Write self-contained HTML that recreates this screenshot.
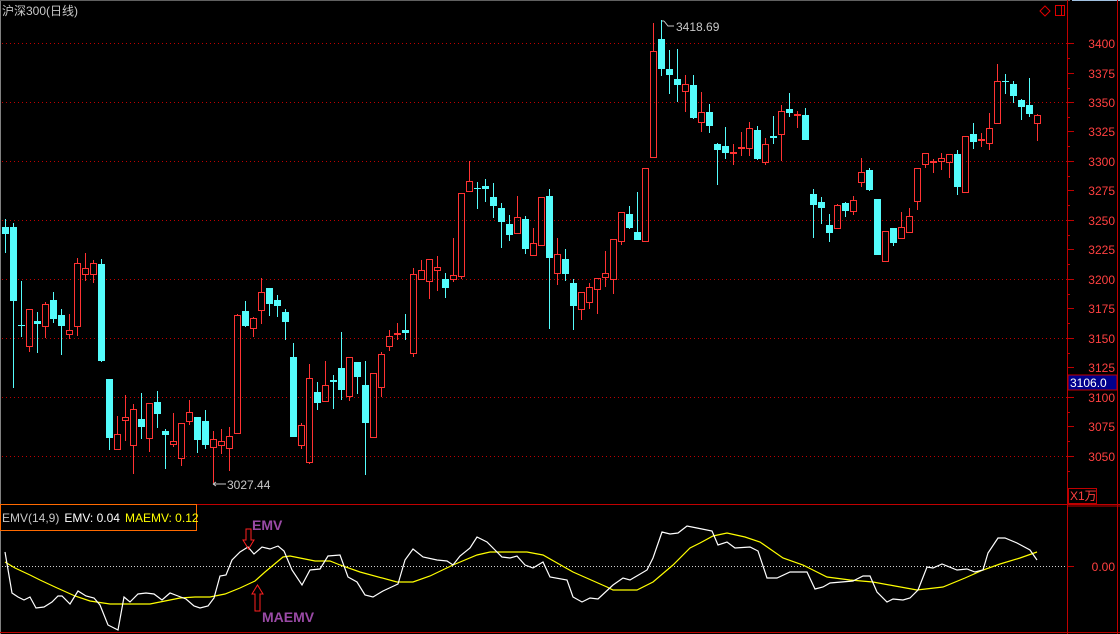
<!DOCTYPE html>
<html><head><meta charset="utf-8"><style>
html,body{margin:0;padding:0;background:#000;}
svg{display:block;}
text{font-family:"Liberation Sans","Noto Sans CJK SC",sans-serif;}
</style></head><body>
<svg width="1120" height="634" viewBox="0 0 1120 634" xmlns="http://www.w3.org/2000/svg" shape-rendering="crispEdges">
<rect width="1120" height="634" fill="#000"/>
<line x1="0.5" y1="0" x2="0.5" y2="634" stroke="#808080"/>
<line x1="0" y1="0.5" x2="1070" y2="0.5" stroke="#606060"/>
<line x1="1072" y1="0.5" x2="1120" y2="0.5" stroke="#a0c0e0"/>
<g stroke="#c00000" stroke-dasharray="1,3">
<line x1="2" y1="43.5" x2="1067" y2="43.5"/><line x1="2" y1="102.5" x2="1067" y2="102.5"/>
<line x1="2" y1="161.5" x2="1067" y2="161.5"/><line x1="2" y1="220.5" x2="1067" y2="220.5"/>
<line x1="2" y1="279.5" x2="1067" y2="279.5"/><line x1="2" y1="338.5" x2="1067" y2="338.5"/>
<line x1="2" y1="397.5" x2="1067" y2="397.5"/><line x1="2" y1="456.5" x2="1067" y2="456.5"/>
</g>
<g stroke="#c00000" fill="none">
<line x1="1067.5" y1="0" x2="1067.5" y2="634"/>
<line x1="1117.5" y1="0" x2="1117.5" y2="634"/>
<line x1="0" y1="504.5" x2="1120" y2="504.5"/>
<line x1="1067" y1="506" x2="1120" y2="506"/>
<line x1="0" y1="632.5" x2="1120" y2="632.5"/>
<rect x="1068.5" y="488.5" width="28" height="15"/>
</g>
<g stroke="#c00000">
<line x1="1067" y1="43.5" x2="1074" y2="43.5"/><line x1="1067" y1="73.5" x2="1074" y2="73.5"/><line x1="1067" y1="102.5" x2="1074" y2="102.5"/><line x1="1067" y1="131.5" x2="1074" y2="131.5"/><line x1="1067" y1="161.5" x2="1074" y2="161.5"/><line x1="1067" y1="190.5" x2="1074" y2="190.5"/><line x1="1067" y1="220.5" x2="1074" y2="220.5"/><line x1="1067" y1="249.5" x2="1074" y2="249.5"/><line x1="1067" y1="279.5" x2="1074" y2="279.5"/><line x1="1067" y1="308.5" x2="1074" y2="308.5"/><line x1="1067" y1="338.5" x2="1074" y2="338.5"/><line x1="1067" y1="367.5" x2="1074" y2="367.5"/><line x1="1067" y1="397.5" x2="1074" y2="397.5"/><line x1="1067" y1="426.5" x2="1074" y2="426.5"/><line x1="1067" y1="456.5" x2="1074" y2="456.5"/>
<line x1="1067" y1="58.5" x2="1070" y2="58.5"/><line x1="1067" y1="88.5" x2="1070" y2="88.5"/><line x1="1067" y1="117.5" x2="1070" y2="117.5"/><line x1="1067" y1="146.5" x2="1070" y2="146.5"/><line x1="1067" y1="176.5" x2="1070" y2="176.5"/><line x1="1067" y1="205.5" x2="1070" y2="205.5"/><line x1="1067" y1="235.5" x2="1070" y2="235.5"/><line x1="1067" y1="264.5" x2="1070" y2="264.5"/><line x1="1067" y1="294.5" x2="1070" y2="294.5"/><line x1="1067" y1="323.5" x2="1070" y2="323.5"/><line x1="1067" y1="353.5" x2="1070" y2="353.5"/><line x1="1067" y1="412.5" x2="1070" y2="412.5"/><line x1="1067" y1="441.5" x2="1070" y2="441.5"/><line x1="1067" y1="471.5" x2="1070" y2="471.5"/>
<line x1="1067" y1="566.5" x2="1074" y2="566.5"/>
</g>
<g fill="#ff4040" font-size="12" text-anchor="end">
<text x="1115" y="48">3400</text><text x="1115" y="78">3375</text><text x="1115" y="107">3350</text><text x="1115" y="136">3325</text><text x="1115" y="166">3300</text><text x="1115" y="195">3275</text><text x="1115" y="225">3250</text><text x="1115" y="254">3225</text><text x="1115" y="284">3200</text><text x="1115" y="313">3175</text><text x="1115" y="343">3150</text><text x="1115" y="372">3125</text><text x="1115" y="402">3100</text><text x="1115" y="431">3075</text><text x="1115" y="461">3050</text>
<text x="1115" y="571">0.00</text>
</g>
<rect x="1068" y="375" width="49" height="15" fill="#00008c" stroke="#c00000"/>
<text x="1070" y="387" fill="#ffffff" font-size="12">3106.0</text>
<text x="1070" y="500" fill="#ff4040" font-size="12">X1万</text>
<g fill="none" stroke="#e00000">
<path d="M1045 6 L1050 11 L1045 16 L1040 11 Z" shape-rendering="auto"/>
<rect x="1055.5" y="5.5" width="9" height="10"/>
<line x1="1061.5" y1="5" x2="1061.5" y2="16"/>
</g>
<text x="2" y="15" fill="#c8c8c8" font-size="12">沪深300(日线)</text>
<g stroke="#54fcfc">
<line x1="5.5" y1="219" x2="5.5" y2="253"/><line x1="13.5" y1="223" x2="13.5" y2="388"/><line x1="21.5" y1="281" x2="21.5" y2="337"/><line x1="37.5" y1="312" x2="37.5" y2="353"/><line x1="53.5" y1="292" x2="53.5" y2="323"/><line x1="61.5" y1="309" x2="61.5" y2="355"/><line x1="101.5" y1="259" x2="101.5" y2="362"/><line x1="109.5" y1="379" x2="109.5" y2="450"/><line x1="141.5" y1="393" x2="141.5" y2="439"/><line x1="157.5" y1="391" x2="157.5" y2="428"/><line x1="165.5" y1="429" x2="165.5" y2="469"/><line x1="197.5" y1="417" x2="197.5" y2="453"/><line x1="205.5" y1="410" x2="205.5" y2="449"/><line x1="245.5" y1="301" x2="245.5" y2="327"/><line x1="269.5" y1="288" x2="269.5" y2="316"/><line x1="277.5" y1="295" x2="277.5" y2="317"/><line x1="285.5" y1="309" x2="285.5" y2="340"/><line x1="293.5" y1="343" x2="293.5" y2="437"/><line x1="317.5" y1="382" x2="317.5" y2="410"/><line x1="333.5" y1="375" x2="333.5" y2="409"/><line x1="341.5" y1="332" x2="341.5" y2="400"/><line x1="357.5" y1="362" x2="357.5" y2="394"/><line x1="365.5" y1="361" x2="365.5" y2="475"/><line x1="405.5" y1="314" x2="405.5" y2="340"/><line x1="445.5" y1="273" x2="445.5" y2="298"/><line x1="477.5" y1="182" x2="477.5" y2="209"/><line x1="485.5" y1="179" x2="485.5" y2="202"/><line x1="493.5" y1="183" x2="493.5" y2="218"/><line x1="501.5" y1="203" x2="501.5" y2="248"/><line x1="509.5" y1="215" x2="509.5" y2="241"/><line x1="525.5" y1="216" x2="525.5" y2="254"/><line x1="549.5" y1="189" x2="549.5" y2="329"/><line x1="565.5" y1="249" x2="565.5" y2="281"/><line x1="573.5" y1="279" x2="573.5" y2="330"/><line x1="629.5" y1="206" x2="629.5" y2="229"/><line x1="637.5" y1="192" x2="637.5" y2="240"/><line x1="661.5" y1="20" x2="661.5" y2="76"/><line x1="669.5" y1="50" x2="669.5" y2="94"/><line x1="677.5" y1="49" x2="677.5" y2="102"/><line x1="693.5" y1="75" x2="693.5" y2="119"/><line x1="709.5" y1="104" x2="709.5" y2="133"/><line x1="717.5" y1="143" x2="717.5" y2="185"/><line x1="725.5" y1="127" x2="725.5" y2="159"/><line x1="757.5" y1="126" x2="757.5" y2="160"/><line x1="773.5" y1="116" x2="773.5" y2="144"/><line x1="789.5" y1="93" x2="789.5" y2="117"/><line x1="805.5" y1="108" x2="805.5" y2="140"/><line x1="813.5" y1="189" x2="813.5" y2="238"/><line x1="821.5" y1="197" x2="821.5" y2="224"/><line x1="829.5" y1="214" x2="829.5" y2="242"/><line x1="845.5" y1="202" x2="845.5" y2="217"/><line x1="869.5" y1="168" x2="869.5" y2="191"/><line x1="877.5" y1="199" x2="877.5" y2="255"/><line x1="893.5" y1="228" x2="893.5" y2="246"/><line x1="957.5" y1="150" x2="957.5" y2="195"/><line x1="973.5" y1="123" x2="973.5" y2="149"/><line x1="1005.5" y1="74" x2="1005.5" y2="94"/><line x1="1013.5" y1="81" x2="1013.5" y2="103"/><line x1="1021.5" y1="99" x2="1021.5" y2="120"/><line x1="1029.5" y1="78" x2="1029.5" y2="117"/>
</g>
<g fill="#54fcfc">
<rect x="2" y="227" width="7" height="7"/><rect x="10" y="227" width="7" height="74"/><rect x="18" y="325" width="7" height="1"/><rect x="34" y="321" width="7" height="3"/><rect x="50" y="300" width="7" height="19"/><rect x="58" y="315" width="7" height="11"/><rect x="98" y="264" width="7" height="97"/><rect x="106" y="379" width="7" height="59"/><rect x="138" y="419" width="7" height="8"/><rect x="154" y="402" width="7" height="12"/><rect x="162" y="431" width="7" height="4"/><rect x="194" y="417" width="7" height="23"/><rect x="202" y="421" width="7" height="24"/><rect x="242" y="311" width="7" height="15"/><rect x="266" y="288" width="7" height="16"/><rect x="274" y="300" width="7" height="6"/><rect x="282" y="312" width="7" height="10"/><rect x="290" y="357" width="7" height="80"/><rect x="314" y="392" width="7" height="11"/><rect x="330" y="380" width="7" height="2"/><rect x="338" y="368" width="7" height="22"/><rect x="354" y="362" width="7" height="15"/><rect x="362" y="385" width="7" height="38"/><rect x="402" y="330" width="7" height="3"/><rect x="442" y="279" width="7" height="9"/><rect x="474" y="188" width="7" height="1"/><rect x="482" y="186" width="7" height="3"/><rect x="490" y="197" width="7" height="9"/><rect x="498" y="208" width="7" height="14"/><rect x="506" y="224" width="7" height="11"/><rect x="522" y="219" width="7" height="30"/><rect x="546" y="196" width="7" height="62"/><rect x="562" y="259" width="7" height="15"/><rect x="570" y="283" width="7" height="23"/><rect x="626" y="214" width="7" height="14"/><rect x="634" y="232" width="7" height="8"/><rect x="658" y="39" width="7" height="30"/><rect x="666" y="69" width="7" height="6"/><rect x="674" y="79" width="7" height="6"/><rect x="690" y="85" width="7" height="33"/><rect x="706" y="112" width="7" height="14"/><rect x="714" y="144" width="7" height="6"/><rect x="722" y="146" width="7" height="7"/><rect x="754" y="130" width="7" height="29"/><rect x="770" y="136" width="7" height="2"/><rect x="786" y="109" width="7" height="4"/><rect x="802" y="115" width="7" height="25"/><rect x="810" y="194" width="7" height="11"/><rect x="818" y="202" width="7" height="6"/><rect x="826" y="225" width="7" height="8"/><rect x="842" y="203" width="7" height="8"/><rect x="866" y="170" width="7" height="20"/><rect x="874" y="199" width="7" height="56"/><rect x="890" y="228" width="7" height="15"/><rect x="954" y="154" width="7" height="33"/><rect x="970" y="134" width="7" height="8"/><rect x="1002" y="81" width="7" height="1"/><rect x="1010" y="84" width="7" height="12"/><rect x="1018" y="100" width="7" height="7"/><rect x="1026" y="105" width="7" height="9"/>
</g>
<g stroke="#ff3232" fill="none">
<path d="M29.5 347V352M45.5 302V304M45.5 327V338M69.5 314V330M69.5 335V339M77.5 258V263M77.5 327V336M85.5 253V268M85.5 275V281M93.5 260V263M93.5 275V283M117.5 416V434M125.5 395V417M125.5 421V441M133.5 404V409M133.5 446V474M149.5 439V452M173.5 413V441M173.5 445V447M181.5 459V466M189.5 400V412M189.5 422V425M213.5 431V439M213.5 448V483M221.5 429V441M221.5 446V454M229.5 427V436M229.5 449V471M237.5 314V315M253.5 317V318M253.5 329V337M261.5 278V292M261.5 311V324M301.5 423V425M301.5 446V449M309.5 364V378M309.5 463V464M325.5 361V385M349.5 397V401M381.5 352V354M381.5 388V397M389.5 330V336M389.5 347V351M397.5 323V333M397.5 335V340M413.5 268V274M413.5 354V357M421.5 260V270M429.5 282V299M437.5 256V267M437.5 271V291M453.5 238V275M453.5 280V282M461.5 277V279M469.5 161V181M517.5 196V217M533.5 228V243M557.5 238V254M557.5 274V285M581.5 310V320M589.5 283V287M589.5 303V309M597.5 290V314M605.5 251V273M605.5 278V287M613.5 280V294M621.5 242V245M653.5 23V51M685.5 75V84M685.5 92V112M701.5 92V112M701.5 123V132M733.5 144V152M733.5 153V165M741.5 132V147M741.5 149V156M749.5 122V128M749.5 149V156M765.5 138V144M765.5 163V165M781.5 105V111M781.5 135V161M797.5 111V114M797.5 116V128M837.5 204V205M853.5 196V200M853.5 212V215M861.5 158V172M861.5 183V187M901.5 212V227M909.5 208V216M917.5 202V210M925.5 165V168M933.5 159V161M933.5 162V173M941.5 153V158M941.5 162V170M949.5 163V178M981.5 133V139M981.5 141V147M989.5 113V128M989.5 144V150M997.5 64V81M1037.5 114V115M1037.5 124V141"/>
<rect x="26.5" y="309.5" width="6" height="37"/><rect x="42.5" y="304.5" width="6" height="22"/><rect x="66.5" y="330.5" width="6" height="4"/><rect x="74.5" y="263.5" width="6" height="63"/><rect x="82.5" y="268.5" width="6" height="6"/><rect x="90.5" y="263.5" width="6" height="11"/><rect x="114.5" y="434.5" width="6" height="15"/><rect x="122.5" y="417.5" width="6" height="3"/><rect x="130.5" y="409.5" width="6" height="36"/><rect x="146.5" y="403.5" width="6" height="35"/><rect x="170.5" y="441.5" width="6" height="3"/><rect x="178.5" y="423.5" width="6" height="35"/><rect x="186.5" y="412.5" width="6" height="9"/><rect x="210.5" y="439.5" width="6" height="8"/><rect x="218.5" y="441.5" width="6" height="4"/><rect x="226.5" y="436.5" width="6" height="12"/><rect x="234.5" y="315.5" width="6" height="118"/><rect x="250.5" y="318.5" width="6" height="10"/><rect x="258.5" y="292.5" width="6" height="18"/><rect x="298.5" y="425.5" width="6" height="20"/><rect x="306.5" y="378.5" width="6" height="84"/><rect x="322.5" y="385.5" width="6" height="16"/><rect x="346.5" y="357.5" width="6" height="39"/><rect x="370.5" y="373.5" width="6" height="64"/><rect x="378.5" y="354.5" width="6" height="33"/><rect x="386.5" y="336.5" width="6" height="10"/><rect x="394.5" y="333.5" width="6" height="1"/><rect x="410.5" y="274.5" width="6" height="79"/><rect x="418.5" y="270.5" width="6" height="9"/><rect x="426.5" y="259.5" width="6" height="22"/><rect x="434.5" y="267.5" width="6" height="3"/><rect x="450.5" y="275.5" width="6" height="4"/><rect x="458.5" y="193.5" width="6" height="83"/><rect x="466.5" y="181.5" width="6" height="10"/><rect x="514.5" y="217.5" width="6" height="16"/><rect x="530.5" y="243.5" width="6" height="12"/><rect x="538.5" y="197.5" width="6" height="48"/><rect x="554.5" y="254.5" width="6" height="19"/><rect x="578.5" y="292.5" width="6" height="17"/><rect x="586.5" y="287.5" width="6" height="15"/><rect x="594.5" y="278.5" width="6" height="11"/><rect x="602.5" y="273.5" width="6" height="4"/><rect x="610.5" y="239.5" width="6" height="40"/><rect x="618.5" y="212.5" width="6" height="29"/><rect x="642.5" y="168.5" width="6" height="73"/><rect x="650.5" y="51.5" width="6" height="106"/><rect x="682.5" y="84.5" width="6" height="7"/><rect x="698.5" y="112.5" width="6" height="10"/><rect x="730.5" y="152.5" width="6" height="1"/><rect x="738.5" y="147.5" width="6" height="1"/><rect x="746.5" y="128.5" width="6" height="20"/><rect x="762.5" y="144.5" width="6" height="18"/><rect x="778.5" y="111.5" width="6" height="23"/><rect x="794.5" y="114.5" width="6" height="1"/><rect x="834.5" y="205.5" width="6" height="23"/><rect x="850.5" y="200.5" width="6" height="11"/><rect x="858.5" y="172.5" width="6" height="10"/><rect x="882.5" y="231.5" width="6" height="30"/><rect x="898.5" y="227.5" width="6" height="11"/><rect x="906.5" y="216.5" width="6" height="16"/><rect x="914.5" y="168.5" width="6" height="33"/><rect x="922.5" y="153.5" width="6" height="11"/><rect x="930.5" y="161.5" width="6" height="1"/><rect x="938.5" y="158.5" width="6" height="3"/><rect x="946.5" y="154.5" width="6" height="8"/><rect x="962.5" y="136.5" width="6" height="56"/><rect x="978.5" y="139.5" width="6" height="1"/><rect x="986.5" y="128.5" width="6" height="15"/><rect x="994.5" y="81.5" width="6" height="42"/><rect x="1034.5" y="115.5" width="6" height="8"/>
</g>
<g stroke="#c8c8c8" fill="none" shape-rendering="auto">
<path d="M662 21 H664 M664 21 L668 26 H674"/>
<path d="M213 484 H226 M213 484 L216 482 M213 484 L216 486"/>
</g>
<text x="676" y="31" fill="#c8c8c8" font-size="12">3418.69</text>
<text x="227" y="489" fill="#c8c8c8" font-size="12">3027.44</text>
<line x1="2" y1="566.5" x2="1067" y2="566.5" stroke="#d0d0d0" stroke-dasharray="1,2"/>
<g fill="none" stroke-width="1.2" shape-rendering="auto">
<polyline stroke="#ffff00" points="5,562 15,568 30,575 40,580 55,587 75,596 90,601 110,604 130,604 150,604 165,601 180,598 195,597 210,597 225,594 240,588 255,581 265,572 283,557 290,556 300,558 315,561 330,561 340,565 360,572 397,582 413,582 430,576 453,565 477,555 490,552 527,552 543,555 573,572 607,587 613,590 637,590 653,582 673,565 690,548 700,543 713,536 727,533 745,537 760,542 783,558 803,565 827,577 850,580 873,582 895,586 917,590 943,587 965,578 983,570 1000,564 1020,558 1037,552"/>
<polyline stroke="#ffffff" points="5,552 12,593 18,597 24,600 30,597 36,608 44,607 52,602 58,596 62,596 70,604 78,591 86,596 94,598 100,605 108,625 118,630 124,597 130,602 138,594 146,593 154,594 162,600 170,593 178,596 186,599 194,606 200,608 208,606 214,598 220,576 226,575 232,560 240,552 248,547 254,554 262,547 270,549 278,546 284,551 292,570 302,585 310,570 320,569 328,556 340,555 348,577 357,582 365,595 373,597 383,591 398,584 405,560 413,549 423,557 437,560 447,561 453,565 460,556 470,548 477,537 487,542 495,550 502,557 510,558 517,556 525,565 533,568 543,562 550,577 567,580 573,597 582,602 590,598 598,599 613,585 623,578 630,580 647,570 653,558 662,532 670,534 678,533 687,526 697,528 712,531 718,545 727,542 735,548 750,547 758,551 767,578 777,578 790,572 807,572 815,589 823,587 830,583 853,581 863,576 870,576 877,592 887,602 893,599 903,600 910,598 918,590 927,567 933,568 942,564 957,570 967,569 975,572 983,570 988,553 998,538 1005,538 1017,543 1030,550 1037,560"/>
</g>
<rect x="0.5" y="504.5" width="196" height="26" fill="#000" stroke="#ff6a00"/>
<text x="2" y="522" font-size="12"><tspan fill="#c8c8c8">EMV(14,9)</tspan><tspan fill="#ffffff" dx="5">EMV: 0.04</tspan><tspan fill="#ffff00" dx="5">MAEMV: 0.12</tspan></text>
<g fill="none" stroke="#ff2020" shape-rendering="auto">
<path d="M246 529 H251 V540 H254 L248.5 549 L243 540 H246 Z"/>
<path d="M255 611 H260 V594 H263 L257.5 585 L252 594 H255 Z"/>
</g>
<text x="252" y="530" fill="#9a4aa6" font-size="14" font-weight="bold">EMV</text>
<text x="262" y="622" fill="#9a4aa6" font-size="14" font-weight="bold">MAEMV</text>
</svg>
</body></html>
